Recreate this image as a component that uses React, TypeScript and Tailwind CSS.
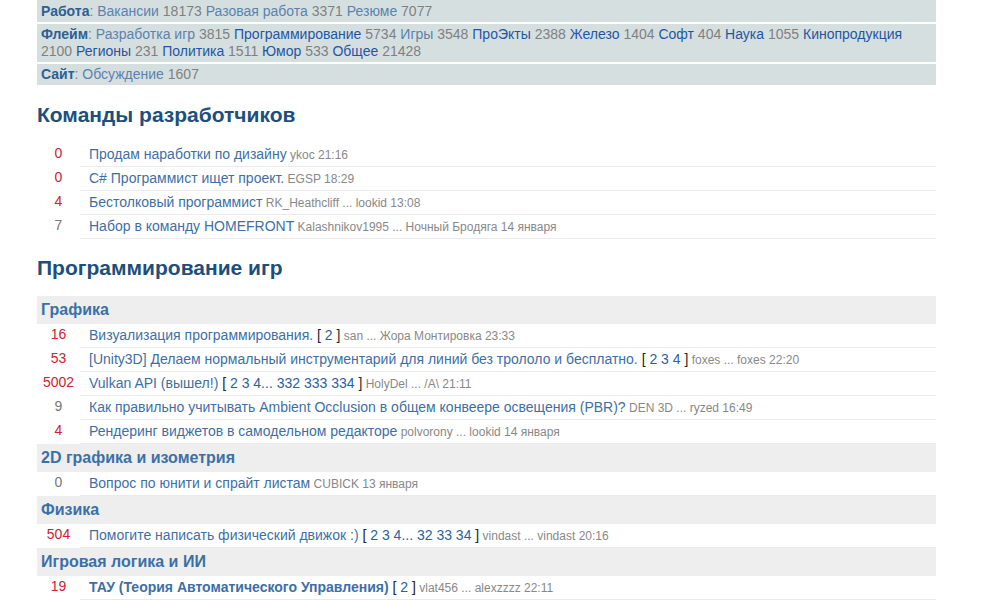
import React from 'react'

type Topic = {
  count: string
  hot?: boolean
  title: string
  bold?: boolean
  pages?: string
  meta: string
}

const teams: Topic[] = [
  { count: '0', hot: true, title: 'Продам наработки по дизайну', meta: 'ykoc 21:16' },
  { count: '0', hot: true, title: 'C# Программист ищет проект.', meta: 'EGSP 18:29' },
  { count: '4', hot: true, title: 'Бестолковый программист', meta: 'RK_Heathcliff ... lookid 13:08' },
  { count: '7', title: 'Набор в команду HOMEFRONT', meta: 'Kalashnikov1995 ... Ночный Бродяга 14 января' },
]

const groups: { name: string; topics: Topic[] }[] = [
  {
    name: 'Графика',
    topics: [
      { count: '16', hot: true, title: 'Визуализация программирования.', pages: '2', meta: 'san ... Жора Монтировка 23:33' },
      { count: '53', hot: true, title: '[Unity3D] Делаем нормальный инструментарий для линий без трололо и бесплатно.', pages: '2 3 4', meta: 'foxes ... foxes 22:20' },
      { count: '5002', hot: true, title: 'Vulkan API (вышел!)', pages: '2 3 4... 332 333 334', meta: 'HolyDel ... /A\\ 21:11' },
      { count: '9', title: 'Как правильно учитывать Ambient Occlusion в общем конвеере освещения (PBR)?', meta: 'DEN 3D ... ryzed 16:49' },
      { count: '4', hot: true, title: 'Рендеринг виджетов в самодельном редакторе', meta: 'polvorony ... lookid 14 января' },
    ],
  },
  {
    name: '2D графика и изометрия',
    topics: [{ count: '0', title: 'Вопрос по юнити и спрайт листам', meta: 'CUBICK 13 января' }],
  },
  {
    name: 'Физика',
    topics: [
      { count: '504', hot: true, title: 'Помогите написать физический движок :)', pages: '2 3 4... 32 33 34', meta: 'vindast ... vindast 20:16' },
    ],
  },
  {
    name: 'Игровая логика и ИИ',
    topics: [
      { count: '19', hot: true, title: 'ТАУ (Теория Автоматического Управления)', bold: true, pages: '2', meta: 'vlat456 ... alexzzzz 22:11' },
    ],
  },
]

function L({ children, v }: { children: React.ReactNode; v?: boolean }) {
  return <span className={v ? 'text-[#5b82ad]' : 'text-[#1f56a3]'}>{children}</span>
}

function N({ children }: { children: React.ReactNode }) {
  return <span className="text-[#808080]">{children}</span>
}

function TopicRow({ t }: { t: Topic }) {
  return (
    <div className="flex h-[24px]">
      <div className={`w-[43px] text-center leading-[20px] ${t.hot ? 'text-[#cc2233]' : 'text-[#777]'}`}>
        {t.count}
      </div>
      <div className="flex-1 border-b border-[#eaeaea] pl-[9px] leading-[22px] whitespace-nowrap">
        <span className={`text-[#3d6fa6] ${t.bold ? 'font-bold' : ''}`}>{t.title}</span>
        {t.pages && (
          <span className="text-[#222]">
            {' '}[ <span className="text-[#2a5fa5]">{t.pages}</span> ]
          </span>
        )}
        <span className="text-[12px] text-[#888]"> {t.meta}</span>
      </div>
    </div>
  )
}

export default function App() {
  return (
    <div className="min-h-screen bg-white text-[14px]" style={{ fontFamily: '"Liberation Sans", Arial, sans-serif' }}>
      <div className="ml-[37px] w-[899px]">
        {/* Categories */}
        <div className="flex flex-col gap-[2px] text-[#808080]">
          <div className="bg-[#d6dfe0] px-[4px] h-[22px] leading-[22px]">
            <b className="text-[#2d5f94]">Работа</b>: <L v>Вакансии</L> <N>18173</N> <L v>Разовая работа</L> <N>3371</N>{' '}
            <L v>Резюме</L> <N>7077</N>
          </div>
          <div className="bg-[#d6dfe0] px-[4px] py-[2px] leading-[17px]">
            <b className="text-[#2d5f94]">Флейм</b>: <L v>Разработка игр</L> <N>3815</N> <L>Программирование</L> <N>5734</N>{' '}
            <L v>Игры</L> <N>3548</N> <L>ПроЭкты</L> <N>2388</N> <L>Железо</L> <N>1404</N> <L>Софт</L> <N>404</N>{' '}
            <L>Наука</L> <N>1055</N> <L>Кинопродукция</L> <N>2100</N> <L>Регионы</L> <N>231</N> <L>Политика</L>{' '}
            <N>1511</N> <L>Юмор</L> <N>533</N> <L>Общее</L> <N>21428</N>
          </div>
          <div className="bg-[#d6dfe0] px-[4px] h-[21px] leading-[21px]">
            <b className="text-[#2d5f94]">Сайт</b>: <L v>Обсуждение</L> <N>1607</N>
          </div>
        </div>

        {/* Teams */}
        <h2 className="mt-[18px] mb-[16px] text-[21px] font-bold text-[#1d4f7c] leading-[24px]">Команды разработчиков</h2>
        <div>
          {teams.map((t, i) => (
            <TopicRow key={i} t={t} />
          ))}
        </div>

        {/* Game programming */}
        <h2 className="mt-[17px] mb-[16px] text-[21px] font-bold text-[#1d4f7c] leading-[24px]">Программирование игр</h2>
        <div className="flex flex-col">
          {groups.map((g) => (
            <div key={g.name}>
              <div className="bg-[#eeeeee] h-[28px] leading-[28px] px-[4px] text-[16px] font-bold text-[#3a70a8]">{g.name}</div>
              {g.topics.map((t, i) => (
                <TopicRow key={i} t={t} />
              ))}
            </div>
          ))}
        </div>
      </div>
    </div>
  )
}
